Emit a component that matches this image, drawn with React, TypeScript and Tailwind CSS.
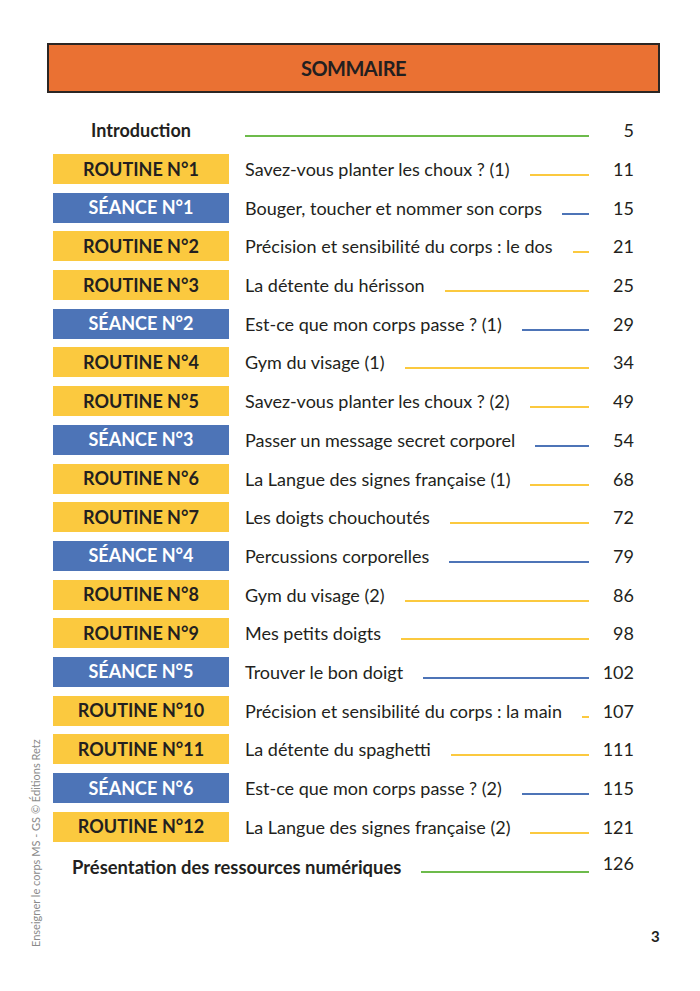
const rows: { kind: "r" | "s"; label: string; title: string; page: string }[] = [
  { kind: "r", label: "ROUTINE N°1", title: "Savez-vous planter les choux ? (1)", page: "11" },
  { kind: "s", label: "SÉANCE N°1", title: "Bouger, toucher et nommer son corps", page: "15" },
  { kind: "r", label: "ROUTINE N°2", title: "Précision et sensibilité du corps\u202F: le dos", page: "21" },
  { kind: "r", label: "ROUTINE N°3", title: "La détente du hérisson", page: "25" },
  { kind: "s", label: "SÉANCE N°2", title: "Est-ce que mon corps passe ? (1)", page: "29" },
  { kind: "r", label: "ROUTINE N°4", title: "Gym du visage (1)", page: "34" },
  { kind: "r", label: "ROUTINE N°5", title: "Savez-vous planter les choux ? (2)", page: "49" },
  { kind: "s", label: "SÉANCE N°3", title: "Passer un message secret corporel", page: "54" },
  { kind: "r", label: "ROUTINE N°6", title: "La Langue des signes française (1)", page: "68" },
  { kind: "r", label: "ROUTINE N°7", title: "Les doigts chouchoutés", page: "72" },
  { kind: "s", label: "SÉANCE N°4", title: "Percussions corporelles", page: "79" },
  { kind: "r", label: "ROUTINE N°8", title: "Gym du visage (2)", page: "86" },
  { kind: "r", label: "ROUTINE N°9", title: "Mes petits doigts", page: "98" },
  { kind: "s", label: "SÉANCE N°5", title: "Trouver le bon doigt", page: "102" },
  { kind: "r", label: "ROUTINE N°10", title: "Précision et sensibilité du corps\u202F: la main", page: "107" },
  { kind: "r", label: "ROUTINE N°11", title: "La détente du spaghetti", page: "111" },
  { kind: "s", label: "SÉANCE N°6", title: "Est-ce que mon corps passe ? (2)", page: "115" },
  { kind: "r", label: "ROUTINE N°12", title: "La Langue des signes française (2)", page: "121" },
];

export default function App() {
  return (
    <div
      className="relative w-[700px] h-[991px] bg-white text-[#231f20]"
      style={{ fontFamily: "Lato, 'Noto Sans', sans-serif" }}
    >
      <div className="pt-[43px] pl-[47px] pr-[40px]">
        {/* header bar */}
        <div className="h-[50px] border-2 border-[#2b2624] bg-[#ea7133] flex items-center justify-center">
          <span className="text-[20px] font-bold tracking-tight">SOMMAIRE</span>
        </div>

        <div className="pl-[6px] pr-[26px] mt-[22px]">
          {/* introduction */}
          <div className="flex items-end h-[30px]">
            <div className="w-[176px] text-center text-[18px] font-bold leading-[30px]">Introduction</div>
            <div className="flex-1 ml-[16px] flex items-end pb-[8px]">
              <div className="flex-1 h-[2px] bg-[#6dbb4b]" />
            </div>
            <div className="w-[45px] text-right text-[18px] leading-[30px]">5</div>
          </div>

          <div className="mt-[9px] flex flex-col gap-[8.7px]">
            {rows.map((r) => (
              <div key={r.label} className="flex items-center h-[30px]">
                <div
                  className={
                    "w-[176px] h-[30px] flex items-center justify-center text-[18px] font-bold " +
                    (r.kind === "r" ? "bg-[#fbc93f] text-[#231f20]" : "bg-[#4d74b7] text-white")
                  }
                >
                  {r.label}
                </div>
                <div className="flex-1 ml-[16px] flex items-end h-[30px]">
                  <span className="text-[18px] leading-[30px] whitespace-nowrap">{r.title}</span>
                  <div
                    className={
                      "flex-1 h-[2px] ml-[20px] mb-[8px] " +
                      (r.kind === "r" ? "bg-[#fbc93f]" : "bg-[#4d74b7]")
                    }
                  />
                </div>
                <div className="w-[45px] text-right text-[18px] leading-[30px]">{r.page}</div>
              </div>
            ))}
          </div>

          {/* last row */}
          <div className="flex items-end h-[30px] mt-[10px]">
            <span className="pl-[19px] text-[18.4px] font-bold leading-[30px] whitespace-nowrap">
              Présentation des ressources numériques
            </span>
            <div className="flex-1 ml-[20px] mb-[9px] h-[2px] bg-[#6dbb4b]" />
            <div className="w-[45px] text-right text-[18px] leading-[30px] self-start -mt-[4px]">126</div>
          </div>
        </div>
      </div>

      {/* side credit */}
      <div className="absolute left-[28px] top-[947px] origin-top-left -rotate-90 whitespace-nowrap text-[11px] text-[#8a8a8a]">
        Enseigner le corps MS - GS © Éditions Retz
      </div>

      {/* page number */}
      <div className="absolute left-[651px] top-[925px] text-[15px] font-bold">3</div>
    </div>
  );
}
